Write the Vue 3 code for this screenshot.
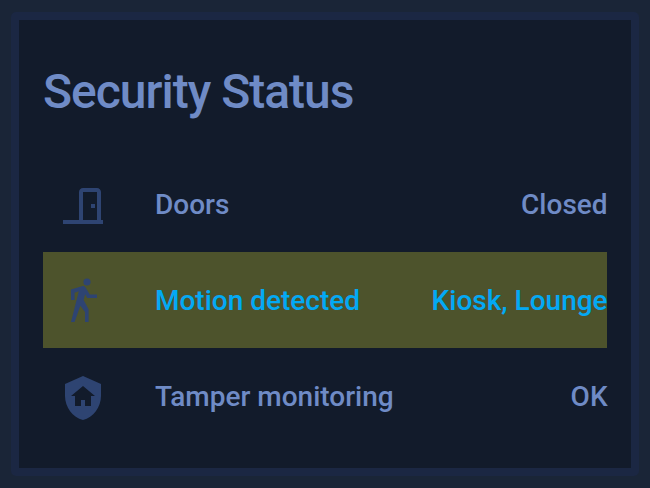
<script setup>
const rows = [
  { label: 'Doors', value: 'Closed', on: false, icon: 'M16,11H18V13H16V11M12,3H19C20.11,3 21,3.89 21,5V19H22V21H2V19H10V5C10,3.89 10.89,3 12,3M12,5V19H19V5H12Z' },
  { label: 'Motion detected', value: 'Kiosk, Lounge', on: true, icon: 'M14.12,10H19V8.2H15.38L13.38,4.87C13.08,4.37 12.54,4.03 11.92,4.03C11.74,4.03 11.58,4.06 11.42,4.11L6,5.8V11H7.8V7.33L9.91,6.67L6,22H7.8L10.67,13.89L13,17V22H14.8V15.59L12.31,11.05L13.04,8.18M14,3.8A1.8,1.8 0 0 0 15.8,2A1.8,1.8 0 0 0 14,0.2A1.8,1.8 0 0 0 12.2,2A1.8,1.8 0 0 0 14,3.8Z' },
  { label: 'Tamper monitoring', value: 'OK', on: false, icon: 'M11,13H13V16H16V11H18L12,6L6,11H8V16H11V13M12,1L21,5V11C21,16.55 17.16,21.74 12,23C6.84,21.74 3,16.55 3,11V5L12,1Z' }
]
</script>

<template>
  <main class="page">
    <section class="card">
      <h1>Security Status</h1>
      <div v-for="row in rows" :key="row.label" class="row" :class="{ active: row.on }">
        <svg viewBox="0 0 24 24"><path :d="row.icon" /></svg>
        <span class="label">{{ row.label }}</span>
        <span class="value">{{ row.value }}</span>
      </div>
    </section>
  </main>
</template>

<style>
body { background: #1a2537; }
</style>
<style scoped>
.page { box-sizing: border-box; height: 488px; padding: 12px 11px; font-family: Roboto, sans-serif; }
.card { box-sizing: border-box; height: 464px; border: 8px solid #1b2743; border-radius: 5px; background: #121b2b; padding: 0 24px; color: #6f8bc6; }
h1 { margin: 0; height: 136px; padding-top: 40px; box-sizing: border-box; font-size: 48px; line-height: 64px; font-weight: 500; letter-spacing: -1px; white-space: nowrap; }
.row { display: flex; align-items: center; height: 96px; font-size: 28px; font-weight: 500; white-space: nowrap; }
svg { width: 48px; height: 48px; margin: 4px 48px 0 16px; fill: #2e4472; overflow: visible; }
.label { flex: 1; }
.value { margin-right: -.6px; }
.active { background: #4d532c; color: #03a9f4; }
</style>
